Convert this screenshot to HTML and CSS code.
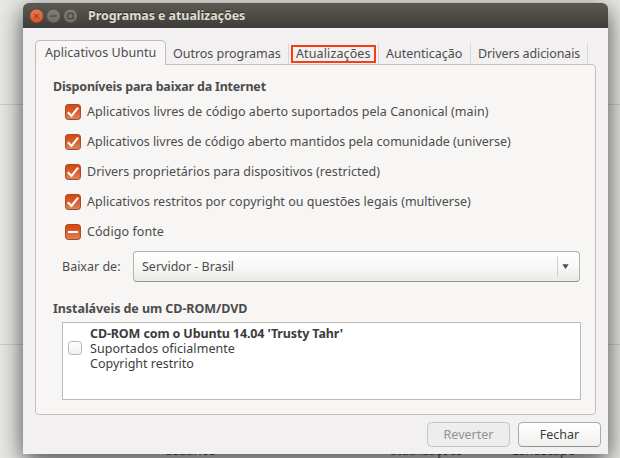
FILE: index.html
```
<!DOCTYPE html>
<html lang="pt-BR">
<head>
<meta charset="utf-8">
<title>Programas e atualizações</title>
<link rel="stylesheet" href="styles.css">
</head>
<body>
<div class="desktop">
  <span class="behind b1">usuários</span><span class="behind b2">atualizações</span><span class="behind b3">Landscape</span>
</div>
<main class="window">
  <header class="titlebar">
    <svg class="controls" width="60" height="16" viewBox="0 0 60 16">
      <defs>
        <linearGradient id="red" x1="0" y1="0" x2="0" y2="1"><stop offset="0" stop-color="#f07850"/><stop offset="1" stop-color="#e6501e"/></linearGradient>
        <linearGradient id="gray" x1="0" y1="0" x2="0" y2="1"><stop offset="0" stop-color="#7f7d77"/><stop offset="1" stop-color="#706e68"/></linearGradient>
      </defs>
      <g stroke="#484640" stroke-width=".7">
        <circle cx="8.500" cy="8" r="6.900" fill="url(#red)"/>
        <circle cx="25.500" cy="8" r="6.900" fill="url(#gray)"/>
        <circle cx="42.500" cy="8" r="6.900" fill="url(#gray)"/>
      </g>
      <g fill="none" stroke="#45433e">
        <path d="M6.200 5.700l4.600 4.600m0-4.600l-4.600 4.600" stroke-width="1"/>
        <path d="M22.500 8h6" stroke-width="1.200"/>
        <rect x="39.800" y="5.300" width="5.400" height="5.400" rx=".5" stroke-width="1.200"/>
      </g>
    </svg>
    <h1>Programas e atualizações</h1>
  </header>
  <nav class="tabs">
    <div class="tab t1 active"><span>Aplicativos Ubuntu</span></div>
    <div class="tab t2"><span>Outros programas</span></div>
    <div class="tab t3"><span class="marked">Atualizações</span></div>
    <div class="tab t4"><span>Autenticação</span></div>
    <div class="tab t5"><span>Drivers adicionais</span></div>
  </nav>
  <section class="pane">
    <h2 class="h-net">Disponíveis para baixar da Internet</h2>
    <div class="sources">
      <label class="row r1"><svg class="check" viewBox="0 0 16 16"><use href="#box"/><path class="tick" d="M2.800 8.200l3.700 3.800 6.600-8.400"/></svg><span>Aplicativos livres de código aberto suportados pela Canonical (main)</span></label>
      <label class="row r2"><svg class="check" viewBox="0 0 16 16"><use href="#box"/><path class="tick" d="M2.800 8.200l3.700 3.800 6.600-8.400"/></svg><span>Aplicativos livres de código aberto mantidos pela comunidade (universe)</span></label>
      <label class="row r3"><svg class="check" viewBox="0 0 16 16"><use href="#box"/><path class="tick" d="M2.800 8.200l3.700 3.800 6.600-8.400"/></svg><span>Drivers proprietários para dispositivos (restricted)</span></label>
      <label class="row r4"><svg class="check" viewBox="0 0 16 16"><use href="#box"/><path class="tick" d="M2.800 8.200l3.700 3.800 6.600-8.400"/></svg><span>Aplicativos restritos por copyright ou questões legais (multiverse)</span></label>
      <label class="row r5"><svg class="check" viewBox="0 0 16 16"><use href="#box"/><path class="tick" d="M3 8h10"/></svg><span>Código fonte</span></label>
    </div>
    <div class="download">
      <span class="from">Baixar de:</span>
      <div class="select"><span class="value">Servidor - Brasil</span><span class="drop"><svg width="7" height="5" viewBox="0 0 7 5"><path d="M.3.300h6.400L3.500 5z" fill="#4c4c4c"/></svg></span></div>
    </div>
    <h2 class="h-cd">Instaláveis de um CD-ROM/DVD</h2>
    <div class="list">
      <span class="empty"></span>
      <div class="lines">
        <div><strong class="l1">CD-ROM com o Ubuntu 14.04 'Trusty Tahr'</strong></div>
        <div><span class="l2">Suportados oficialmente</span></div>
        <div><span class="l3">Copyright restrito</span></div>
      </div>
    </div>
  </section>
  <footer class="actions">
    <button class="btn revert" disabled>Reverter</button>
    <button class="btn close">Fechar</button>
  </footer>
</main>
<svg class="defs" width="0" height="0">
  <defs>
    <linearGradient id="orange" x1="0" y1="0" x2="0" y2="1"><stop offset="0" stop-color="#d9440f"/><stop offset=".5" stop-color="#d95f2c"/><stop offset="1" stop-color="#d98860"/></linearGradient>
    <rect id="box" x=".5" y=".5" width="15" height="15" rx="2.700" fill="url(#orange)" stroke="#a44a26"/>
  </defs>
</svg>
</body>
</html>
```
FILE: styles.css
```
* { box-sizing: border-box; }
body {
  margin: 0;
  width: 620px;
  height: 458px;
  overflow: hidden;
  position: relative;
  background: #e2e2e0;
  font: 12.5px/15px "Noto Sans", "Open Sans", sans-serif;
  color: #4c4c4c;
}
h1, h2 { margin: 0; font-size: 12.5px; font-weight: 700; line-height: 15px; white-space: nowrap; }
span, strong { white-space: nowrap; }

.desktop {
  position: absolute;
  inset: 0;
  background:
    linear-gradient(#cececc, #cececc) 0 104px / 100% 1px no-repeat,
    linear-gradient(#cececc, #cececc) 0 344px / 100% 1px no-repeat,
    #e8e8e6;
}
.behind { position: absolute; top: 443px; color: #55545a; }
.b1 { left: 165px; }
.b2 { left: 390px; }
.b3 { left: 512px; }

.window {
  position: relative;
  width: 585px;
  height: 451px;
  margin: 3px 0 0 23px;
  background: #f2f0f1;
  border-radius: 6px 6px 0 0;
  box-shadow: 0 7px 24px rgba(0, 0, 0, .7);
}
.titlebar {
  display: flex;
  align-items: center;
  height: 25px;
  padding: 0 0 1px 5px;
  border-radius: 6px 6px 0 0;
  background: linear-gradient(#5b5951, #3d3c38);
  border-top: 1px solid #55534c;
}
.controls { flex: none; }
.titlebar h1 { color: #dfdbd2; text-shadow: 0 -1px #2c2b28; letter-spacing: -.08px; }

.tabs { display: flex; height: 36px; padding: 12px 0 0 12px; align-items: flex-end; }
.tab {
  display: flex;
  align-items: center;
  height: 21px;
  border-right: 1px solid #d8d7d5;
}
.tab span { display: block; }
.tabs .active {
  position: relative;
  z-index: 1;
  height: 25px;
  margin-bottom: -1px;
  padding-bottom: 2px;
  border: 1px solid #bdbdbb;
  border-bottom: 0;
  border-radius: 5px 5px 0 0;
  background: #f7f6f5;
}
.t1 { width: 131px; padding-left: 9px; letter-spacing: .04px; }
.t2 { width: 123px; padding-left: 7px; letter-spacing: -.03px; }
.t3 { width: 90px; padding-left: 2px; letter-spacing: .12px; }
.t4 { width: 92px; padding-left: 7px; }
.t5 { width: 117px; padding-left: 7px; letter-spacing: -.1px; }
.marked { width: 85px; height: 18px; padding: 0 3px; line-height: 13px; border: 2px solid #f93c12; }

.pane {
  width: 561px;
  height: 351px;
  margin-left: 12px;
  padding: 14px 14px 0 17px;
  border: 1px solid #c1c1bf;
  border-radius: 0 4px 4px 4px;
  background: #f7f6f5;
}
.h-net { letter-spacing: -.2px; }
.sources { padding: 3px 0 0 12px; }
.row { display: flex; align-items: center; height: 30px; gap: 6px; }
.row span { padding-bottom: 2px; }
.r1 { letter-spacing: .03px; }
.r2 { letter-spacing: -.01px; }
.r3 { letter-spacing: .04px; }
.r4 { letter-spacing: .01px; }
.r5 { letter-spacing: .08px; }
.check { width: 16px; height: 16px; flex: none; }
.tick { fill: none; stroke: #fff; stroke-width: 2.1; }
.download { display: flex; align-items: center; height: 31px; margin-top: 4px; padding-left: 9px; }
.from { width: 71px; }
.select {
  display: flex;
  align-items: center;
  width: 447px;
  height: 31px;
  padding-left: 8px;
  border: 1px solid #b0b0ae;
  border-bottom-color: #929290;
  border-radius: 4px;
  background: linear-gradient(#fff, #f8f8f7 50%, #eaeae9);
}
.drop {
  display: flex;
  align-items: center;
  height: 21px;
  width: 22px;
  margin-left: auto;
  padding-left: 4px;
  border-left: 1px solid #cfcfcd;
}
.h-cd { margin-top: 19px; letter-spacing: -.06px; }
.list {
  display: flex;
  width: 519px;
  height: 78px;
  margin: 6px 0 0 9px;
  padding: 3px 0 0 5px;
  border: 1px solid #bbbbb9;
  background: #fff;
  color: #3c3c3c;
}
.l1 { letter-spacing: -.13px; }
.l2 { letter-spacing: .06px; }
.empty {
  width: 14px;
  height: 14px;
  margin: 15px 8px 0 0;
  border: 1px solid #b5b5b3;
  border-radius: 3.5px;
  background: linear-gradient(#fff, #f0f0ef);
}
.actions { display: flex; justify-content: flex-end; gap: 8px; padding: 7px 7px 0 0; }
.btn {
  width: 83px;
  height: 25px;
  padding: 0;
  border: 1px solid #aaaaa8;
  border-bottom-color: #92928f;
  border-radius: 4.5px;
  background: linear-gradient(#fff, #efefee);
  font: inherit;
  color: #3c3c3c;
}
.btn:disabled { border-color: #c5c5c3; background: #ededed; color: #929289; }
.defs { position: absolute; }
```
